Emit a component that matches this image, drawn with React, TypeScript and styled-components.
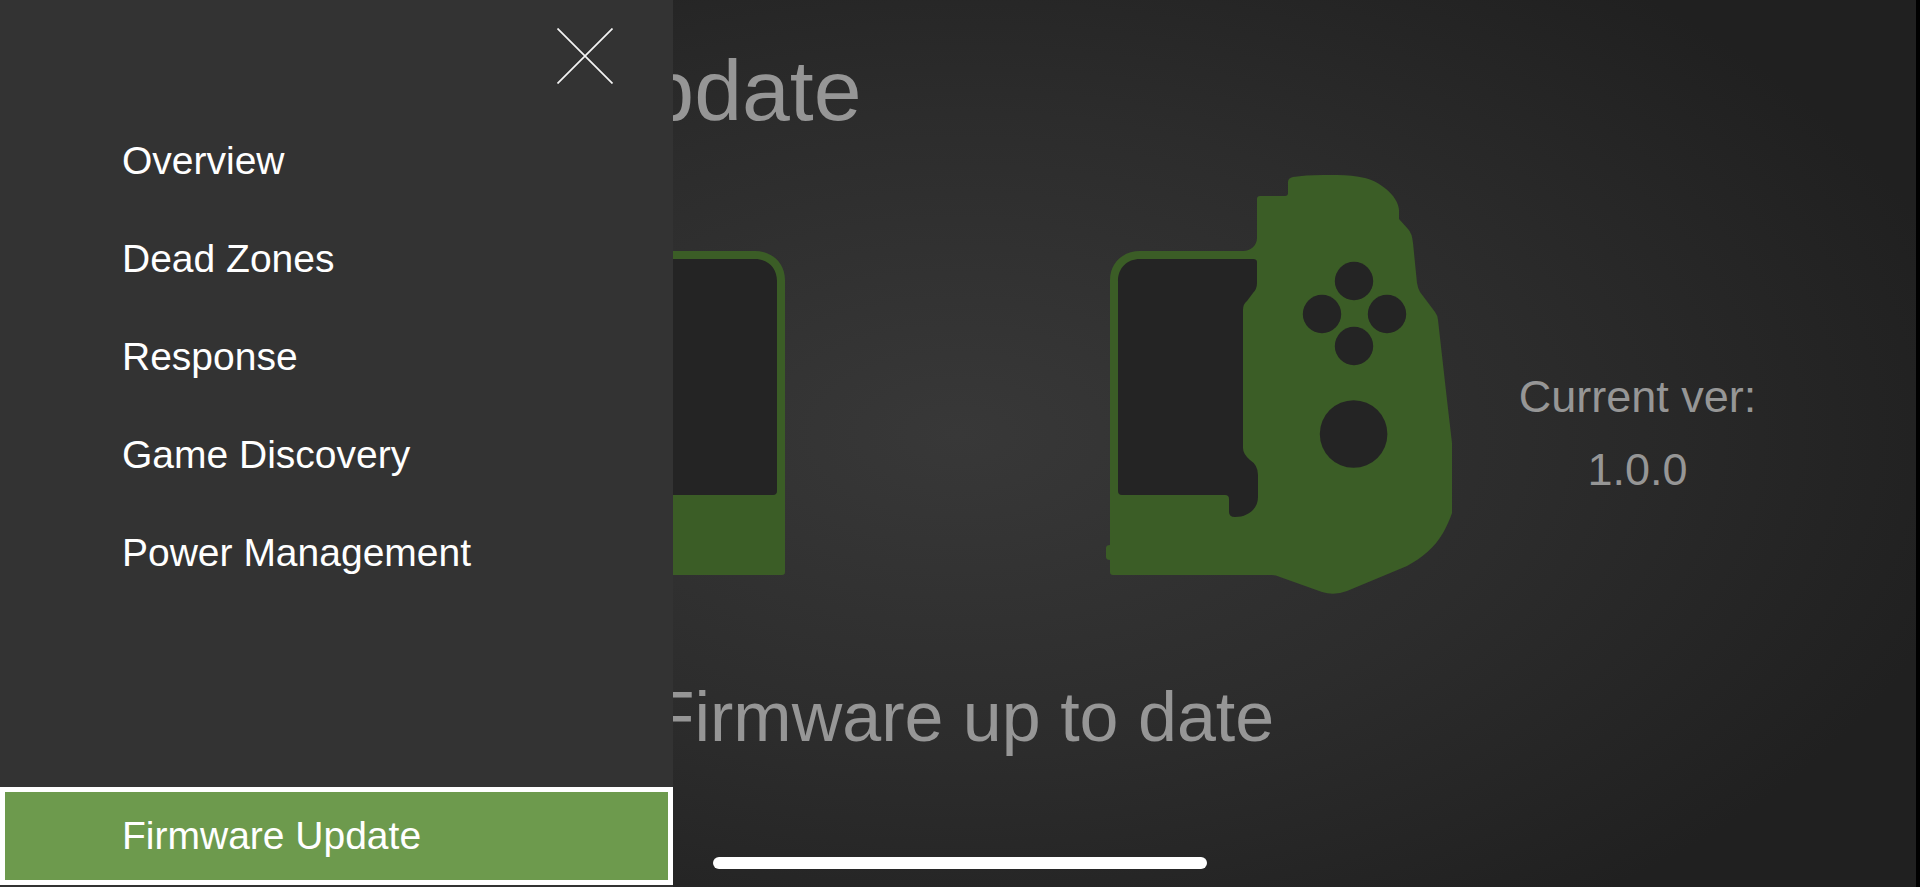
import React from "react";
import styled, { createGlobalStyle } from "styled-components";

const GlobalStyle = createGlobalStyle`
  *, *::before, *::after {
    box-sizing: border-box;
  }
  body {
    margin: 0;
    background: #000;
    font-family: "Liberation Sans", Helvetica, Arial, sans-serif;
  }
`;

const Screen = styled.div`
  position: relative;
  display: flex;
  min-height: 100vh;
  overflow: hidden;
  border-right: 4px solid #000;
  background: radial-gradient(ellipse 54% 66% at 50% 49%, #383838 0%, #2c2c2c 55%, #202020 100%) #202020;
`;

const Page = styled.main`
  display: flex;
  flex: 1;
  flex-direction: column;
  padding-top: 40px;
  color: #969696;
`;

const Title = styled.h1`
  margin: 0;
  padding-left: 202px;
  font-size: 86px;
  font-weight: 400;
  line-height: 100px;
  white-space: nowrap;
`;

const DeviceRow = styled.section`
  display: grid;
  grid-template-columns: 1fr 348px 315px 348px 1fr;
  align-items: center;
  margin-top: 34px;
  padding: 0 94px 0 73px;
`;

const DeviceArt = styled.svg<{ $side: "left" | "right" }>`
  grid-column: ${(p) => (p.$side === "left" ? 2 : 4)};
  display: block;
  width: 348px;
  height: 421px;
  transform: ${(p) => (p.$side === "left" ? "scaleX(-1)" : "none")};
`;

const Version = styled.p`
  grid-column: 5;
  margin: 0;
  padding-top: 96px;
  font-size: 45px;
  line-height: 73px;
  text-align: center;
  white-space: nowrap;
`;

const Status = styled.p`
  margin: 82px 0 0;
  padding-left: 10px;
  font-size: 70px;
  line-height: 80px;
  text-align: center;
  white-space: nowrap;
`;

const HomeArea = styled.footer`
  display: flex;
  justify-content: center;
  margin-top: auto;
  padding: 24px 0 18px 4px;
`;

const HomeBar = styled.div`
  width: 494px;
  height: 12px;
  border-radius: 6px;
  background: #fff;
`;

const Drawer = styled.nav`
  position: absolute;
  top: 0;
  bottom: 0;
  left: 0;
  display: flex;
  flex-direction: column;
  width: 673px;
  max-width: 90%;
  padding-bottom: 2px;
  background: #333;
`;

const CloseButton = styled.button`
  align-self: flex-end;
  display: grid;
  place-items: center;
  width: 112px;
  height: 112px;
  margin-right: 32px;
  padding: 0;
  border: 0;
  background: none;
  color: #f4f4f4;
  cursor: pointer;
`;

const MenuList = styled.ul`
  display: flex;
  flex: 1;
  flex-direction: column;
  margin: 0;
  padding: 0;
  list-style: none;
`;

const MenuItem = styled.li<{ $last?: boolean }>`
  margin-top: ${(p) => (p.$last ? "auto" : "0")};
`;

const MenuLink = styled.a<{ $active?: boolean }>`
  display: flex;
  align-items: center;
  height: 98px;
  padding-left: 117px;
  border: 5px solid ${(p) => (p.$active ? "#fff" : "transparent")};
  background: ${(p) => (p.$active ? "#6d9a4d" : "none")};
  color: #fff;
  font-size: 39px;
  line-height: 48px;
  text-decoration: none;
  white-space: nowrap;
`;

const BODY =
  "M5 106C5 89 18 77 35 77H138C146 77 152 71 152 64V25Q152 22 155 22H180Q183 22 183 19V8Q183 4 188 3Q200 1 218 1H232Q247 1 260 4C279 9 294 25 294 36V45L303 55Q307 59 308 69L312 109Q313 115 315 118L330 138Q333 142 333 146L342 226L347 269V339Q344 348 338 359C330 373 317 384 302 392L242 417Q229 422 217 418L175 403Q171 401 167 401H8Q5 401 5 398V386";
const TAB = "Q1 386 1 383V374Q1 371 5 371";
const CUTOUT =
  "M13 107C13 94 22 85 35 85H148Q152 85 152 88V109Q152 115 148 119L142 127Q138 130 138 136V274Q138 280 145 286Q153 291 153 301V323C153 335 143 343 130 343Q124 343 124 338V325Q124 321 120 321H17Q13 321 13 317Z";

const FACE_BUTTONS = [
  [249, 107],
  [217, 140],
  [282, 140],
  [249, 172],
];

function Device({ side }: { side: "left" | "right" }) {
  return (
    <DeviceArt $side={side} viewBox="0 0 348 421" aria-hidden="true">
      <path fill="#3b5d26" d={`${BODY}${side === "right" ? TAB : ""}Z`} />
      <g fill="#242424">
        <path d={CUTOUT} />
        {FACE_BUTTONS.map(([x, y]) => (
          <circle key={`${x}-${y}`} cx={x} cy={y} r="19.2" />
        ))}
        <circle cx="248.6" cy="260" r="33.8" />
      </g>
    </DeviceArt>
  );
}

const MENU = ["Overview", "Dead Zones", "Response", "Game Discovery", "Power Management", "Firmware Update"];
const ACTIVE = "Firmware Update";

export default function App() {
  return (
    <>
      <GlobalStyle />
      <Screen>
        <Page>
          <Title>Firmware Update</Title>
          <DeviceRow>
            <Device side="left" />
            <Device side="right" />
            <Version>
              Current ver:
              <br />
              1.0.0
            </Version>
          </DeviceRow>
          <Status>Firmware up to date</Status>
          <HomeArea>
            <HomeBar />
          </HomeArea>
        </Page>
        <Drawer aria-label="Main menu">
          <CloseButton type="button" aria-label="Close menu">
            <svg width="56" height="56" viewBox="0 0 56 56" fill="none" stroke="currentColor" strokeWidth="1.7">
              <path d="M0.5 0.5L55.5 55.5M55.5 0.5L0.5 55.5" />
            </svg>
          </CloseButton>
          <MenuList>
            {MENU.map((label) => (
              <MenuItem key={label} $last={label === ACTIVE}>
                <MenuLink href="#" $active={label === ACTIVE} aria-current={label === ACTIVE ? "page" : undefined}>
                  {label}
                </MenuLink>
              </MenuItem>
            ))}
          </MenuList>
        </Drawer>
      </Screen>
    </>
  );
}
